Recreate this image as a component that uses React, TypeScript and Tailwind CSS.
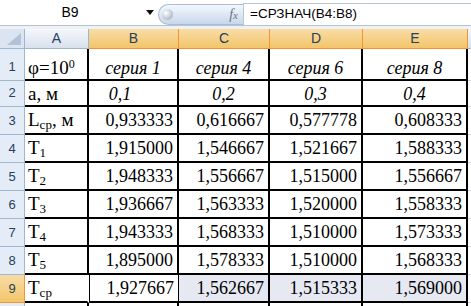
import React from "react";

type Row = {
  n: number;
  h: string;
  label: React.ReactNode;
  vals: string[];
  italic?: boolean;
  pb: string;
};

const rows: Row[] = [
  {
    n: 1,
    h: "h-[32px]",
    label: (
      <>
        φ=10<sup className="text-[12px]">0</sup>
      </>
    ),
    vals: ["серия 1", "серия 4", "серия 6", "серия 8"],
    italic: true,
    pb: "pb-[1px]",
  },
  { n: 2, h: "h-[26px]", label: "a, м", vals: ["0,1", "0,2", "0,3", "0,4"], italic: true, pb: "pb-[1px]" },
  {
    n: 3,
    h: "h-[28px]",
    label: (
      <>
        L<sub className="text-[13px]">ср</sub>, м
      </>
    ),
    vals: ["0,933333", "0,616667", "0,577778", "0,608333"],
    pb: "pb-[3px]",
  },
  { n: 4, h: "h-[28px]", label: <>T<sub className="text-[13px]">1</sub></>, vals: ["1,915000", "1,546667", "1,521667", "1,588333"], pb: "pb-[3px]" },
  { n: 5, h: "h-[28px]", label: <>T<sub className="text-[13px]">2</sub></>, vals: ["1,948333", "1,556667", "1,515000", "1,556667"], pb: "pb-[3px]" },
  { n: 6, h: "h-[28px]", label: <>T<sub className="text-[13px]">3</sub></>, vals: ["1,936667", "1,563333", "1,520000", "1,558333"], pb: "pb-[3px]" },
  { n: 7, h: "h-[28px]", label: <>T<sub className="text-[13px]">4</sub></>, vals: ["1,943333", "1,568333", "1,510000", "1,573333"], pb: "pb-[3px]" },
  { n: 8, h: "h-[28px]", label: <>T<sub className="text-[13px]">5</sub></>, vals: ["1,895000", "1,578333", "1,510000", "1,568333"], pb: "pb-[3px]" },
  { n: 9, h: "h-[28px]", label: <>T<sub className="text-[13px]">ср</sub></>, vals: ["1,927667", "1,562667", "1,515333", "1,569000"], pb: "pb-[3px]" },
];

const colW = ["w-[90px]", "w-[91px]", "w-[93px]", "w-[105px]"];
const letters = ["B", "C", "D", "E"];

export default function App() {
  return (
    <div className="w-[471px] h-[306px] overflow-hidden bg-white font-['Liberation_Sans',Arial,sans-serif]">
      {/* formula bar */}
      <div className="flex h-[25px] items-stretch bg-white">
        <div className="flex w-[140px] items-center justify-center text-[14px] text-black">B9</div>
        <div className="flex w-[18px] items-center">
          <svg width="8" height="5" viewBox="0 0 8 5" className="ml-[6px]">
            <path d="M0 0h8L4 5z" fill="#111" />
          </svg>
        </div>
        <div className="mt-[4px] flex w-[85px] items-center rounded-l-full border border-r-0 border-[#a9bcd6] bg-gradient-to-b from-[#f4f8fd] to-[#c8d7ec]">
          <div className="ml-[3px] h-[11px] w-[11px] rounded-full bg-[radial-gradient(circle_at_35%_35%,#ffffff,#b4bcc8_70%)]" />
          <span className="ml-auto mr-[5px] font-['Liberation_Serif',serif] text-[14px] italic text-[#6b7280]">
            f<span className="text-[11px]">x</span>
          </span>
        </div>
        <div className="mt-[3px] flex flex-1 items-center border-l border-t border-[#b8c6d8] pl-[6px] text-[13.5px] text-black">
          =СРЗНАЧ(B4:B8)
        </div>
      </div>
      <div className="h-[4px] border-t border-[#b5c3d5] bg-[#eef2f7]" />

      {/* header row */}
      <div className="flex h-[20px]">
        <div className="relative w-[25px] border-r border-b border-[#9eb6ce] bg-[#dbe5f1]">
          <svg width="14" height="12" viewBox="0 0 14 12" className="absolute bottom-[3px] right-[3px]">
            <path d="M14 0v12H0z" fill="#b2c3d8" />
          </svg>
        </div>
        <div className="flex w-[64px] items-center justify-center border-r border-b border-[#9eb6ce] bg-gradient-to-b from-[#f5f8fc] to-[#d8e1ed] text-[14px] text-[#283e5b]">
          A
        </div>
        {letters.map((l, i) => (
          <div
            key={l}
            className={`flex ${colW[i]} items-center justify-center border-r border-b border-[#f29436] bg-gradient-to-b from-[#f9dca5] to-[#f2c569] text-[14px] text-[#283e5b]`}
          >
            {l}
          </div>
        ))}
        <div className="flex-1 border-b border-[#9eb6ce] bg-gradient-to-b from-[#f5f8fc] to-[#d8e1ed]" />
      </div>

      {/* data rows */}
      {rows.map((r) => {
        const last = r.n === 9;
        return (
          <div key={r.n} className={`flex ${r.h}`}>
            <div
              className={`flex w-[25px] items-end justify-center pb-[4px] text-[13px] text-[#283e5b] border-r border-b ${
                last ? "border-[#f29436] bg-gradient-to-b from-[#f9dca5] to-[#f2c569]" : "border-[#9eb6ce] bg-[#e4ecf7]"
              }`}
            >
              {r.n}
            </div>
            <div
              className={`flex w-[64px] items-end border-b-2 border-black pl-[3px] font-['Liberation_Serif','Times_New_Roman',serif] text-[19px] leading-[20px] text-black ${r.pb} ${
                last ? "border-r-2 border-r-white" : "border-r-2"
              }`}
            >
              <span className="whitespace-nowrap">{r.label}</span>
            </div>
            {r.vals.map((v, i) => {
              let cls = "border-r-2 border-b-2 border-black";
              if (last && i === 0) cls = "border-l border-r border-b-2 border-black";
              if (last && i > 0) cls = "border-r-2 border-b-2 border-black bg-[#e6e8f2]";
              const align = r.italic
                ? `justify-center italic ${r.n === 2 && i === 0 ? "pr-[26px]" : ""}`
                : "justify-end pr-[4px]";
              return (
                <div
                  key={i}
                  className={`flex ${colW[i]} items-end font-['Liberation_Serif','Times_New_Roman',serif] text-[18px] leading-[20px] text-black ${r.pb} ${align} ${cls}`}
                >
                  {v}
                </div>
              );
            })}
            <div className="flex-1 border-b border-[#d0d7e5]" />
          </div>
        );
      })}

      {/* row 10 peek */}
      <div className="flex h-[3px]">
        <div className="w-[25px] border-r border-[#9eb6ce] bg-[#e4ecf7]" />
        <div className="w-[64px] border-r-2 border-black" />
        <div className="w-[90px] border-r-2 border-black" />
        <div className="w-[91px] border-r-2 border-black" />
        <div className="w-[93px] border-r-2 border-black" />
        <div className="w-[105px] border-r-2 border-black" />
        <div className="flex-1" />
      </div>
    </div>
  );
}
